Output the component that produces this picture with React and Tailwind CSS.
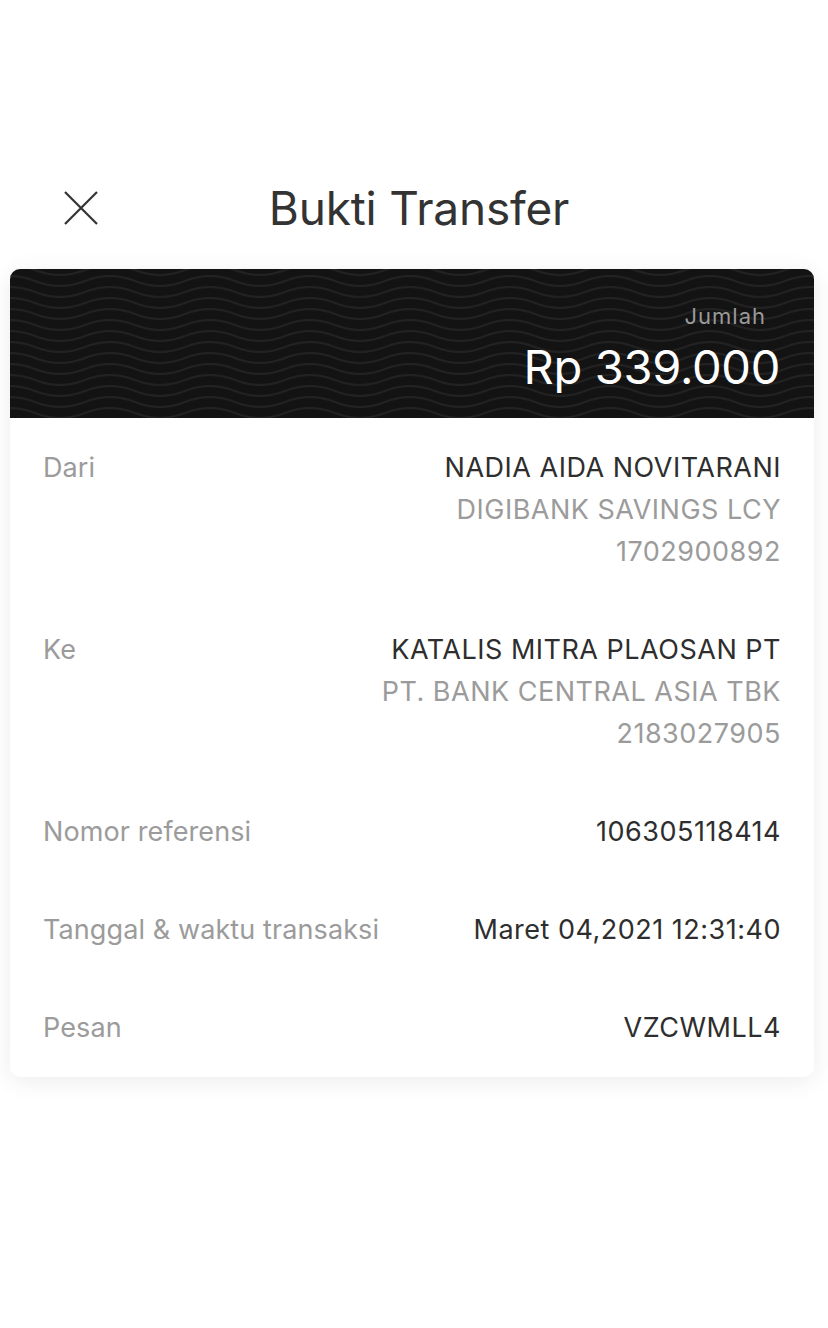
import React from "react";

const font = { fontFamily: "Inter, 'Noto Sans', sans-serif" };

function WaveBg() {
  // motif gelombang di latar header kartu
  const wave = "M-50 6 C-25 6 -25 -4 0 -4 S25 6 50 6 S75 -4 100 -4 S125 6 150 6";
  return (
    <svg className="absolute inset-0 h-full w-full" aria-hidden="true">
      <defs>
        <pattern id="waves" width="100" height="11" patternUnits="userSpaceOnUse">
          {[-11, 0, 11, 22].map((dy) => (
            <path
              key={dy}
              d={wave}
              transform={`translate(0 ${dy})`}
              fill="none"
              stroke="#222222"
              strokeWidth="2"
            />
          ))}
        </pattern>
      </defs>
      <rect width="100%" height="100%" fill="url(#waves)" />
    </svg>
  );
}

function Row({ label, lines }) {
  return (
    <div className="flex justify-between gap-4">
      <span className="text-[#9b9b9b] leading-[42px] tracking-[0.1px]">{label}</span>
      <div className="flex flex-col items-end text-right">
        {lines.map((l, i) => (
          <span
            key={i}
            className={`leading-[42px] tracking-[0.5px] ${i === 0 ? "text-[#2e2e2e]" : "text-[#9b9b9b]"}`}
          >
            {l}
          </span>
        ))}
      </div>
    </div>
  );
}

export default function App() {
  const rows = [
    { label: "Dari", lines: ["NADIA AIDA NOVITARANI", "DIGIBANK SAVINGS LCY", "1702900892"] },
    { label: "Ke", lines: ["KATALIS MITRA PLAOSAN PT", "PT. BANK CENTRAL ASIA TBK", "2183027905"] },
    { label: "Nomor referensi", lines: ["106305118414"] },
    { label: "Tanggal & waktu transaksi", lines: ["Maret 04,2021 12:31:40"] },
    { label: "Pesan", lines: ["VZCWMLL4"] },
  ];

  return (
    <div className="min-h-[1328px] w-[828px] bg-white" style={font}>
      <div className="h-[168px]" />

      {/* Header */}
      <div className="grid h-[80px] grid-cols-[1fr_auto_1fr] items-center">
        <div className="pl-[63px]">
          <svg width="36" height="36" viewBox="0 0 36 36" fill="none">
            <path d="M2 2L34 34M34 2L2 34" stroke="#333" strokeWidth="2.2" />
          </svg>
        </div>
        <h1 className="pl-[10px] text-[46px] font-normal tracking-[-0.2px] text-[#333]">Bukti Transfer</h1>
        <div />
      </div>

      {/* Kartu bukti */}
      <div className="ml-[10px] mr-[14px] mt-[21px] overflow-hidden rounded-[10px] bg-white shadow-[0_4px_24px_rgba(0,0,0,0.08)]">
        <div className="relative h-[149px] bg-[#131313]">
          <WaveBg />
          <div className="relative flex flex-col items-end pr-[34px] pt-[32px]">
            <span className="pr-[14px] text-[22px] leading-[30px] tracking-[1px] text-[#9a9a9a]">Jumlah</span>
            <span className="mt-[9px] text-[47px] leading-[54px] tracking-[-0.3px] text-white">
              Rp 339.000
            </span>
          </div>
        </div>

        <div className="flex flex-col gap-[56px] px-[33px] pb-[28px] pt-[29px] text-[27px]">
          {rows.map((r) => (
            <Row key={r.label} label={r.label} lines={r.lines} />
          ))}
        </div>
      </div>
    </div>
  );
}
